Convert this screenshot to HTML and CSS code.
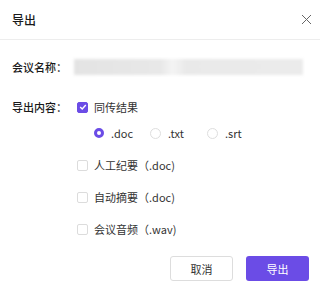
FILE: index.html
```html
<!DOCTYPE html>
<html lang="zh-CN">
<head>
    <meta charset="UTF-8">
    <meta name="viewport" content="width=device-width, initial-scale=1.0">
    <title>导出</title>
    <link rel="stylesheet" href="styles.css">
</head>

<body>
    <div class="dialog">
        <div class="header">
            <span class="title">导出</span>
            <svg class="close" width="11" height="11" viewBox="0 0 11 11">
                <path d="M1 1 L10 10 M10 1 L1 10" stroke="#666" stroke-width="1" fill="none" />
            </svg>
        </div>

        <div class="body">
            <div class="row name-row">
                <div class="label">会议名称：</div>
                <div class="name-blur"></div>
            </div>

            <div class="row content-row">
                <div class="label">导出内容：</div>
                <div class="options">
                    <div class="option">
                        <span class="checkbox checked">
                            <svg width="8" height="8" viewBox="0 0 8 8">
                                <path d="M1.2 4.1 L3.2 6 L6.8 2" stroke="#fff" stroke-width="1.4" fill="none" />
                            </svg>
                        </span>
                        同传结果
                    </div>
                    <div class="radios">
                        <div class="radio-item"><span class="radio selected"></span>.doc</div>
                        <div class="radio-item"><span class="radio"></span>.txt</div>
                        <div class="radio-item"><span class="radio"></span>.srt</div>
                    </div>
                    <div class="option"><span class="checkbox"></span>人工纪要（.doc)</div>
                    <div class="option"><span class="checkbox"></span>自动摘要（.doc)</div>
                    <div class="option"><span class="checkbox"></span>会议音频（.wav)</div>
                </div>
            </div>
        </div>

        <div class="footer">
            <div class="btn cancel-btn">取消</div>
            <div class="btn ok-btn">导出</div>
        </div>
    </div>
</body>

</html>
```

FILE: styles.css
```css
html,
body {
    margin: 0;
    background-color: #fff;
}

.dialog {
    width: 320px;
    height: 289px;
    font-family: "Noto Sans CJK SC", "Noto Sans", sans-serif;
    color: #222;
    font-size: 11px;
}

.header {
    height: 39px;
    padding: 0 8px 0 12px;
    display: flex;
    align-items: center;
    justify-content: space-between;
    border-bottom: 1px solid #ededed;
}

.title {
    font-size: 12px;
    font-weight: 500;
    color: #1a1a1a;
}

.body {
    padding: 19px 17px 0 12px;
}

.row {
    display: flex;
}

.label {
    width: 62px;
    flex-shrink: 0;
    line-height: 16px;
    font-weight: 500;
    color: #1a1a1a;
}

.name-blur {
    flex: 1;
    height: 16px;
    background: linear-gradient(90deg, #e3e3e3 0%, #e8e8e8 38%, #f4f4f4 43%, #e9e9e9 49%, #ebebeb 100%);
    filter: blur(1.5px);
}

.content-row {
    margin-top: 24px;
}

.options {
    display: flex;
    flex-direction: column;
    gap: 16px;
}

.option {
    display: flex;
    align-items: center;
    height: 16px;
    color: #333;
}

.checkbox {
    width: 9px;
    height: 9px;
    border: 1px solid #dcdcdc;
    border-radius: 2px;
    margin: 0 6px 0 3px;
    display: flex;
    align-items: center;
    justify-content: center;
}

.checkbox.checked {
    background-color: #6b4ce6;
    border-color: #6b4ce6;
}

.radios {
    display: flex;
    margin: -6px 0 0 20px;
    height: 16px;
}

.radio-item {
    display: flex;
    align-items: center;
    width: 56px;
    color: #333;
}

.radio-item:nth-child(2) {
    width: 57px;
}

.radio {
    width: 9px;
    height: 9px;
    border: 1px solid #dedede;
    border-radius: 50%;
    margin-right: 7px;
    box-sizing: content-box;
}

.radio.selected {
    width: 4px;
    height: 4px;
    border: 3.5px solid #6b4ce6;
}

.footer {
    display: flex;
    justify-content: flex-end;
    gap: 13px;
    padding: 19px 11px 0 0;
}

.btn {
    width: 63px;
    height: 25px;
    box-sizing: border-box;
    border-radius: 3px;
    display: flex;
    align-items: center;
    justify-content: center;
    font-size: 11px;
}

.cancel-btn {
    border: 1px solid #dddddd;
    color: #333;
}

.ok-btn {
    background-color: #6b4ce6;
    color: #fff;
}
```
